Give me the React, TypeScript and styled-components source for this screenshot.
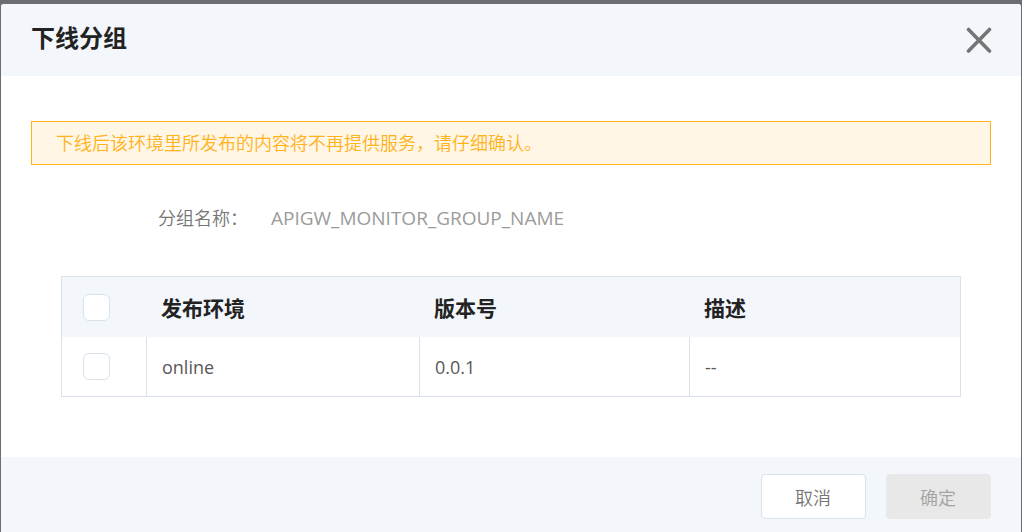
import React, { useState } from "react";
import styled, { createGlobalStyle } from "styled-components";

const GlobalStyle = createGlobalStyle`
  *, *::before, *::after { box-sizing: border-box; }
  body {
    margin: 0;
    background: #6b6d70;
    color: #575757;
    font: 18px/24px "Open Sans", "Noto Sans CJK SC", sans-serif;
  }
  button { font: inherit; }
`;

const Overlay = styled.div`
  display: flex;
  flex-direction: column;
  min-height: 100vh;
  padding: 4px 1px 0;
`;

const Dialog = styled.section`
  display: flex;
  flex: 1;
  flex-direction: column;
  background: #fff;
  border-radius: 3px 3px 0 0;
  overflow: hidden;
`;

const Header = styled.header`
  display: flex;
  align-items: center;
  justify-content: space-between;
  padding: 18px 29px 18px 30px;
  background: #f3f6fb;
`;

const Title = styled.h2`
  margin: 0;
  padding-bottom: 4px;
  color: #222;
  font-size: 24px;
  line-height: 32px;
`;

const CloseButton = styled.button`
  display: flex;
  padding: 0;
  border: 0;
  background: none;
  color: #757575;
  cursor: pointer;
`;

const Body = styled.div`
  flex: 1;
  padding: 45px 30px 60px;
`;

const Notice = styled.p`
  margin: 0;
  padding: 9px 24px;
  border: 1px solid #ffb21a;
  background: #fff6e6;
  color: #ffb21a;
  font-weight: 350;
`;

const Field = styled.dl`
  display: flex;
  gap: 23px;
  margin: 0;
  padding: 41px 30px 46px;
`;

const FieldLabel = styled.dt`
  width: 187px;
  color: #757575;
  font-weight: 350;
  text-align: right;
`;

const FieldValue = styled.dd`
  margin: 0;
  color: #9b9b9b;
  font-size: 19px;
`;

const TableWrap = styled.div`
  margin: 0 30px;
  border: 1px solid #d9e2eb;
`;

const Table = styled.table`
  width: 100%;
  border-spacing: 0;
  table-layout: fixed;
`;

const HeadCell = styled.th<{ $width?: string }>`
  width: ${(p) => p.$width ?? "auto"};
  height: 60px;
  padding: 2px 15px 0;
  background: #f3f6fb;
  color: #222;
  font-size: 21px;
  text-align: left;
`;

const Cell = styled.td`
  height: 59px;
  padding: 0 15px;
  & + & { border-left: 1px solid #d9e2eb; }
`;

const CheckHeadCell = styled(HeadCell)`
  padding: 0 21px;
`;

const CheckCell = styled(Cell)`
  padding: 0 21px;
`;

const Checkbox = styled.input`
  display: block;
  width: 27px;
  height: 27px;
  margin: 0;
  appearance: none;
  border: 1px solid #d9e2eb;
  border-radius: 6px;
  background: #fff;
  &:checked { background: #757575; }
`;

const Footer = styled.footer`
  display: flex;
  justify-content: flex-end;
  gap: 20px;
  padding: 17px 30px 13px;
  background: #f3f6fb;
`;

const Button = styled.button`
  width: 105px;
  height: 45px;
  padding: 2px 1px 0 0;
  border: 1px solid #d9e2eb;
  border-radius: 4px;
  background: #fff;
  color: #757575;
  font-weight: 350;
  &:disabled {
    border-color: #e8e8e8;
    background: #e8e8e8;
    color: #a3a3a3;
  }
`;

const rows = [{ env: "online", version: "0.0.1", note: "--" }];

export default function App() {
  const [selected, setSelected] = useState<string[]>([]);
  const toggle = (env: string) =>
    setSelected((s) => (s.includes(env) ? s.filter((e) => e !== env) : [...s, env]));
  const all = selected.length === rows.length;

  return (
    <Overlay>
      <GlobalStyle />
      <Dialog role="dialog" aria-labelledby="dialog-title">
        <Header>
          <Title id="dialog-title">下线分组</Title>
          <CloseButton type="button" aria-label="关闭">
            <svg width="26" height="26" viewBox="0 0 26 26" fill="none" stroke="currentColor" strokeWidth="3.6" strokeLinecap="round">
              <path d="M2.5 2.5 23.5 24M23.5 2.5 2.5 24" />
            </svg>
          </CloseButton>
        </Header>
        <Body>
          <Notice>下线后该环境里所发布的内容将不再提供服务，请仔细确认。</Notice>
          <Field>
            <FieldLabel>分组名称：</FieldLabel>
            <FieldValue>APIGW_MONITOR_GROUP_NAME</FieldValue>
          </Field>
          <TableWrap>
            <Table>
              <thead>
                <tr>
                  <CheckHeadCell $width="84px">
                    <Checkbox
                      type="checkbox"
                      aria-label="全选"
                      checked={all}
                      onChange={() => setSelected(all ? [] : rows.map((r) => r.env))}
                    />
                  </CheckHeadCell>
                  <HeadCell $width="273px">发布环境</HeadCell>
                  <HeadCell $width="270px">版本号</HeadCell>
                  <HeadCell>描述</HeadCell>
                </tr>
              </thead>
              <tbody>
                {rows.map((r) => (
                  <tr key={r.env}>
                    <CheckCell>
                      <Checkbox
                        type="checkbox"
                        aria-label={r.env}
                        checked={selected.includes(r.env)}
                        onChange={() => toggle(r.env)}
                      />
                    </CheckCell>
                    <Cell>{r.env}</Cell>
                    <Cell>{r.version}</Cell>
                    <Cell>{r.note}</Cell>
                  </tr>
                ))}
              </tbody>
            </Table>
          </TableWrap>
        </Body>
        <Footer>
          <Button type="button">取消</Button>
          <Button type="button" disabled={selected.length === 0}>确定</Button>
        </Footer>
      </Dialog>
    </Overlay>
  );
}
